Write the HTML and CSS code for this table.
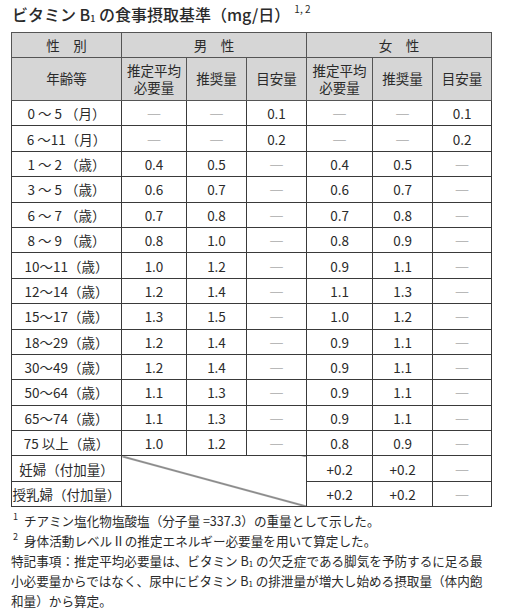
FILE: index.html
```html
<!DOCTYPE html>
<html lang="ja">
<head>
<meta charset="utf-8">
<link rel="stylesheet" href="styles.css">
</head>
<body>
<div class="page">
  <h1 class="title">ビタミン B<sub>1</sub> の食事摂取基準（mg/日）<sup>1, 2</sup></h1>
  <table class="tbl">
    <colgroup>
      <col class="c0"><col class="c1"><col class="c2"><col class="c3"><col class="c4"><col class="c5"><col class="c6">
    </colgroup>
    <thead>
      <tr class="h1">
        <th>性　別</th>
        <th colspan="3">男　性</th>
        <th colspan="3">女　性</th>
      </tr>
      <tr class="h2">
        <th>年齢等</th>
        <th>推定平均<br>必要量</th>
        <th>推奨量</th>
        <th>目安量</th>
        <th>推定平均<br>必要量</th>
        <th>推奨量</th>
        <th>目安量</th>
      </tr>
    </thead>
    <tbody>
      <tr><td>0 ～ 5 （月）</td><td class="d">—</td><td class="d">—</td><td>0.1</td><td class="d">—</td><td class="d">—</td><td>0.1</td></tr>
      <tr><td>6 ～11（月）</td><td class="d">—</td><td class="d">—</td><td>0.2</td><td class="d">—</td><td class="d">—</td><td>0.2</td></tr>
      <tr><td>1 ～ 2 （歳）</td><td>0.4</td><td>0.5</td><td class="d">—</td><td>0.4</td><td>0.5</td><td class="d">—</td></tr>
      <tr><td>3 ～ 5 （歳）</td><td>0.6</td><td>0.7</td><td class="d">—</td><td>0.6</td><td>0.7</td><td class="d">—</td></tr>
      <tr><td>6 ～ 7 （歳）</td><td>0.7</td><td>0.8</td><td class="d">—</td><td>0.7</td><td>0.8</td><td class="d">—</td></tr>
      <tr><td>8 ～ 9 （歳）</td><td>0.8</td><td>1.0</td><td class="d">—</td><td>0.8</td><td>0.9</td><td class="d">—</td></tr>
      <tr><td>10～11（歳）</td><td>1.0</td><td>1.2</td><td class="d">—</td><td>0.9</td><td>1.1</td><td class="d">—</td></tr>
      <tr><td>12～14（歳）</td><td>1.2</td><td>1.4</td><td class="d">—</td><td>1.1</td><td>1.3</td><td class="d">—</td></tr>
      <tr><td>15～17（歳）</td><td>1.3</td><td>1.5</td><td class="d">—</td><td>1.0</td><td>1.2</td><td class="d">—</td></tr>
      <tr><td>18～29（歳）</td><td>1.2</td><td>1.4</td><td class="d">—</td><td>0.9</td><td>1.1</td><td class="d">—</td></tr>
      <tr><td>30～49（歳）</td><td>1.2</td><td>1.4</td><td class="d">—</td><td>0.9</td><td>1.1</td><td class="d">—</td></tr>
      <tr><td>50～64（歳）</td><td>1.1</td><td>1.3</td><td class="d">—</td><td>0.9</td><td>1.1</td><td class="d">—</td></tr>
      <tr><td>65～74（歳）</td><td>1.1</td><td>1.3</td><td class="d">—</td><td>0.9</td><td>1.1</td><td class="d">—</td></tr>
      <tr><td>75 以上（歳）</td><td>1.0</td><td>1.2</td><td class="d">—</td><td>0.8</td><td>0.9</td><td class="d">—</td></tr>
      <tr><td>妊婦（付加量）</td><td class="diag" colspan="3" rowspan="2"></td><td>+0.2</td><td>+0.2</td><td class="d">—</td></tr>
      <tr><td>授乳婦（付加量）</td><td>+0.2</td><td>+0.2</td><td class="d">—</td></tr>
    </tbody>
  </table>
  <div class="notes">
    <p class="fn"><sup>1</sup>チアミン塩化物塩酸塩（分子量 =337.3）の重量として示した。</p>
    <p class="fn"><sup>2</sup>身体活動レベルⅡの推定エネルギー必要量を用いて算定した。</p>
    <p class="sp">特記事項：推定平均必要量は、ビタミン B<sub>1</sub> の欠乏症である脚気を予防するに足る最</p>
    <p class="sp">小必要量からではなく、尿中にビタミン B<sub>1</sub> の排泄量が増大し始める摂取量（体内飽</p>
    <p class="sp">和量）から算定。</p>
  </div>
</div>
</body>
</html>
```

FILE: styles.css
```css
html, body {
  margin: 0;
  padding: 0;
  background: #fff;
}
body {
  font-family: "Noto Sans CJK JP", "Noto Sans", sans-serif;
  color: #2a2a2a;
}
.page {
  padding: 2px 0 0 11px;
  width: 484px;
}
.title {
  margin: 0 0 0 1px;
  font-size: 16px;
  font-weight: 500;
  line-height: 24px;
  height: 30px;
  letter-spacing: 0;
  white-space: nowrap;
}
.title sub {
  font-size: 9px;
  line-height: 0;
  vertical-align: -1px;
}
.title sup {
  font-size: 10px;
  font-weight: 400;
  line-height: 0;
  vertical-align: 8px;
  margin-left: 4px;
}
.tbl {
  border-collapse: collapse;
  table-layout: fixed;
  width: 480px;
  font-size: 13px;
}
.c0 { width: 110px; }
.c1 { width: 65px; }
.c2 { width: 60px; }
.c3 { width: 60px; }
.c4 { width: 66px; }
.c5 { width: 60px; }
.c6 { width: 59px; }
.tbl th, .tbl td {
  border: 1px solid #3a3a3a;
  padding: 0;
  text-align: center;
  white-space: nowrap;
}
.tbl th {
  background: #d6d6d6;
  font-weight: 400;
  color: #2a2a2a;
  border-color: #555;
}
.h1 th {
  height: 24px;
  font-size: 13.5px;
}
.h2 th {
  height: 42px;
  line-height: 17.5px;
  font-size: 13.5px;
}
.tbl td {
  height: 24.4px;
  line-height: 16px;
  font-size: 13.5px;
}
.tbl td.d {
  color: #b8b8b8;
  font-family: "DejaVu Sans", sans-serif;
  font-size: 14px;
}
.tbl td.diag {
  background: linear-gradient(to top right, transparent calc(50% - 1px), #222 50%, transparent calc(50% + 1px));
}
.notes {
  margin-top: 4px;
  font-size: 12.6px;
  line-height: 20px;
  white-space: nowrap;
}
.notes p {
  margin: 0;
}
.fn {
  padding-left: 2px;
}
.fn sup {
  font-size: 9px;
  line-height: 0;
  vertical-align: 6px;
  margin-right: 6px;
}
.sp sub {
  font-size: 8px;
  line-height: 0;
  vertical-align: -1px;
}
```
